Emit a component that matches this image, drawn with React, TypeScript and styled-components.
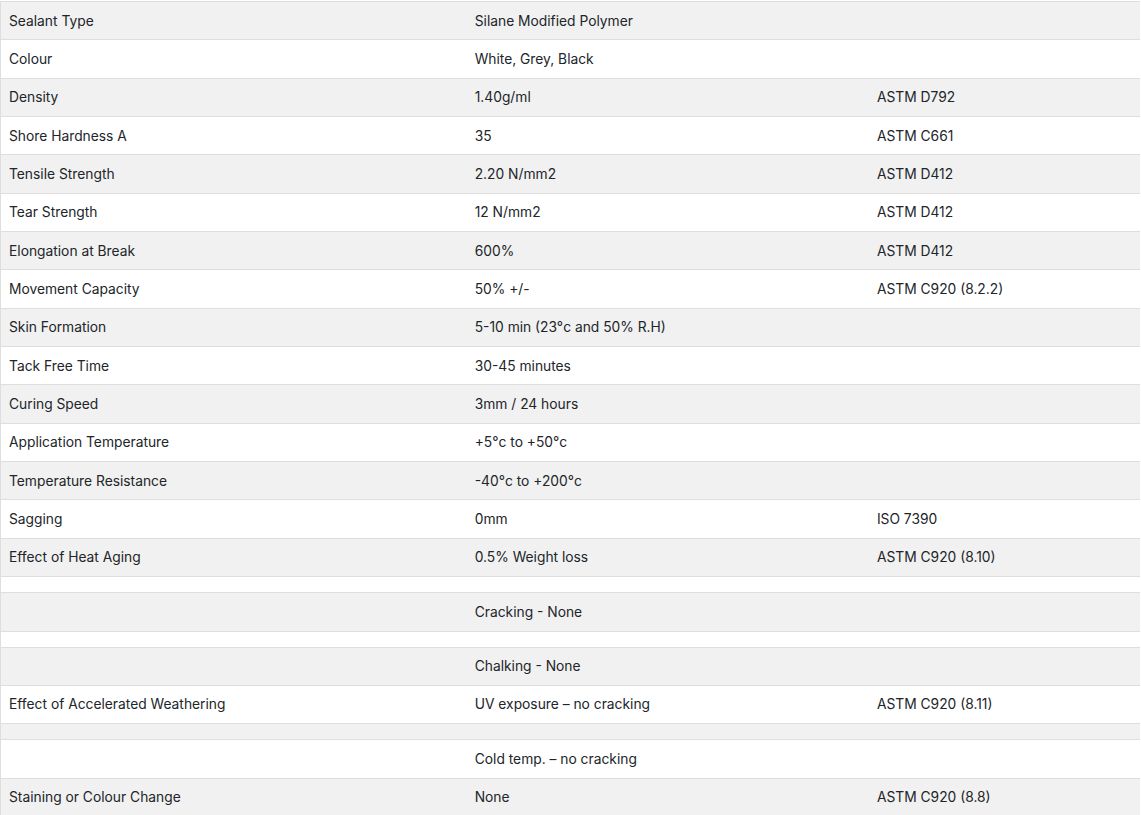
import React from "react";
import styled, { createGlobalStyle } from "styled-components";

const GlobalStyle = createGlobalStyle`
  html, body {
    margin: 0;
    padding: 0;
    background: #ffffff;
  }
  body {
    font-family: Inter, "Noto Sans", "Liberation Sans", sans-serif;
    font-size: 14px;
    color: #212529;
  }
`;

const Wrapper = styled.div`
  padding-top: 1px;
  width: 1140px;
`;

const Table = styled.table`
  width: 1140px;
  border-collapse: collapse;
  table-layout: fixed;
  border-left: 1px solid #dedede;
`;

const Row = styled.tr<{ $striped: boolean }>`
  background: ${(p) => (p.$striped ? "#f1f1f1" : "#ffffff")};
  border-top: 1px solid #dedede;
  border-bottom: 1px solid #dedede;
`;

const Cell = styled.td<{ $width: number }>`
  box-sizing: border-box;
  width: ${(p) => p.$width}px;
  padding: 7.5px 8px;
  line-height: 22.35px;
  font-size: 13.8px;
  color: #212529;
  vertical-align: middle;
  white-space: nowrap;
`;

type Item = [string, string, string];

const rows: Item[] = [
  ["Sealant Type", "Silane Modified Polymer", ""],
  ["Colour", "White, Grey, Black", ""],
  ["Density", "1.40g/ml", "ASTM D792"],
  ["Shore Hardness A", "35", "ASTM C661"],
  ["Tensile Strength", "2.20 N/mm2", "ASTM D412"],
  ["Tear Strength", "12 N/mm2", "ASTM D412"],
  ["Elongation at Break", "600%", "ASTM D412"],
  ["Movement Capacity", "50% +/-", "ASTM C920 (8.2.2)"],
  ["Skin Formation", "5-10 min (23°c and 50% R.H)", ""],
  ["Tack Free Time", "30-45 minutes", ""],
  ["Curing Speed", "3mm / 24 hours", ""],
  ["Application Temperature", "+5°c to +50°c", ""],
  ["Temperature Resistance", "-40°c to +200°c", ""],
  ["Sagging", "0mm", "ISO 7390"],
  ["Effect of Heat Aging", "0.5% Weight loss", "ASTM C920 (8.10)"],
  ["", "", ""],
  ["", "Cracking - None", ""],
  ["", "", ""],
  ["", "Chalking - None", ""],
  ["Effect of Accelerated Weathering", "UV exposure – no cracking", "ASTM C920 (8.11)"],
  ["", "", ""],
  ["", "Cold temp. – no cracking", ""],
  ["Staining or Colour Change", "None", "ASTM C920 (8.8)"],
];

const widths = [466, 402, 271];

export default function App() {
  return (
    <>
      <GlobalStyle />
      <Wrapper>
        <Table>
          <tbody>
            {rows.map((r, i) => (
              <Row key={i} $striped={i % 2 === 0}>
                {r.map((c, j) => (
                  <Cell key={j} $width={widths[j]}>
                    {c}
                  </Cell>
                ))}
              </Row>
            ))}
          </tbody>
        </Table>
      </Wrapper>
    </>
  );
}
